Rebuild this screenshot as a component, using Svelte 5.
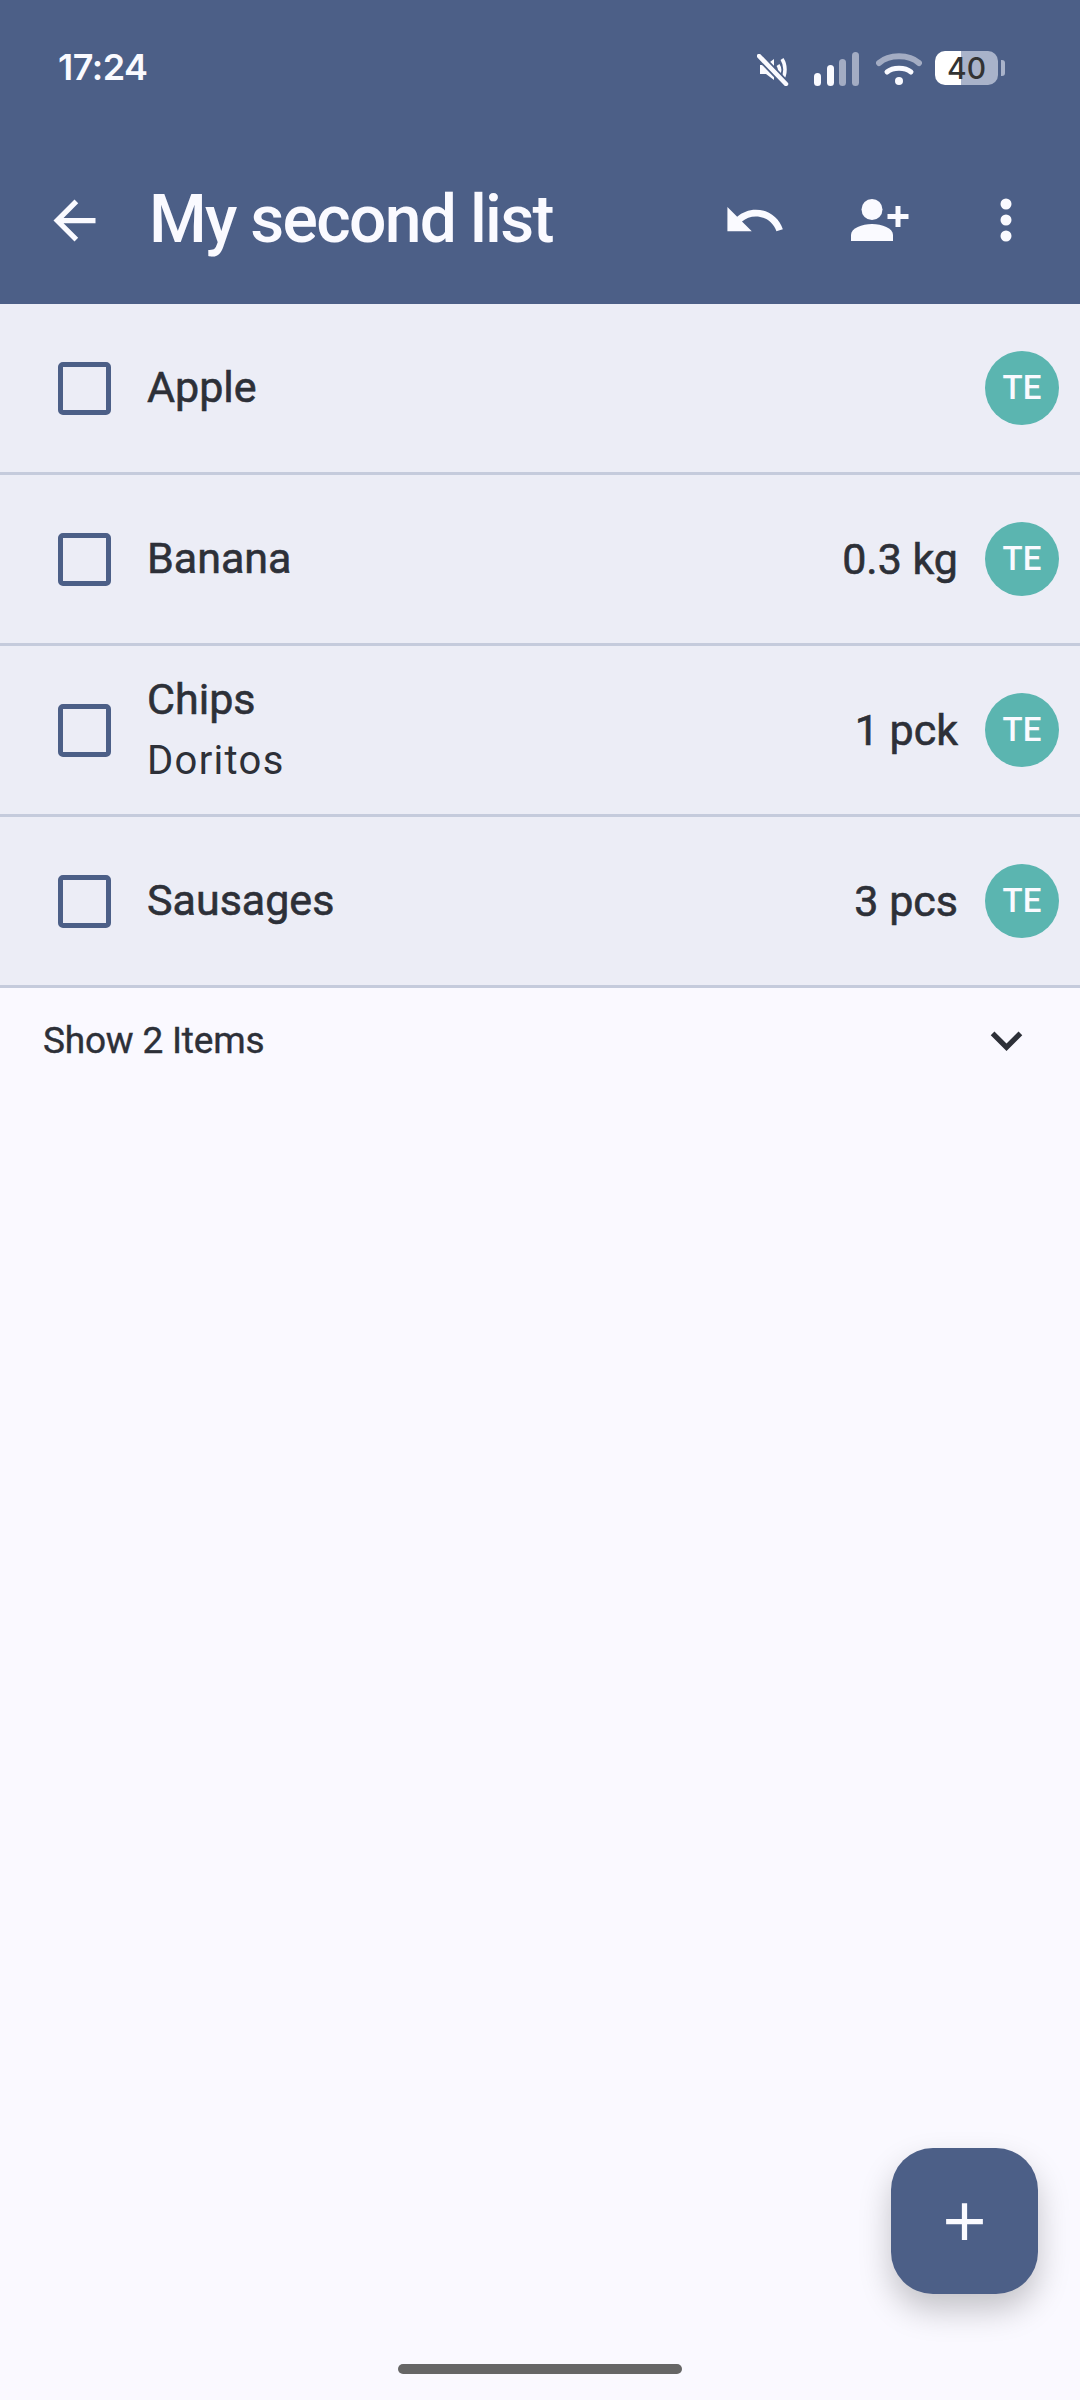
<script>
  const items = [
    { name: 'Apple', note: '', qty: '' },
    { name: 'Banana', note: '', qty: '0.3 kg' },
    { name: 'Chips', note: 'Doritos', qty: '1 pck' },
    { name: 'Sausages', note: '', qty: '3 pcs' }
  ];
</script>

<div class="screen">
  <header class="appbar">
    <div class="status-bar">
      <span class="time">17:24</span>
      <div class="status-icons">
        <svg class="ic-mute" width="32" height="32" viewBox="0 0 32 32">
          <path d="M3 11h6l8-6v21l-8-6H3z" fill="#fafaff" />
          <path d="M21 11c2 3 2 7 0 10M25 5c4 6 4 15 0 21" fill="none" stroke="#fafaff" stroke-width="3.500" />
          <path d="M2 2l27 28" stroke="#4c5f87" stroke-width="8" />
          <path d="M2 2l27 28" stroke="#fafaff" stroke-width="4.500" stroke-linecap="round" />
        </svg>
        <svg class="ic-signal" width="46" height="34" viewBox="0 0 46 34" fill="#fafaff">
          <rect x="0" y="21" width="7" height="13" rx="3.500" />
          <rect x="13" y="13" width="7" height="21" rx="3.500" />
          <rect x="25" y="7" width="7" height="27" rx="3.500" opacity="0.5" />
          <rect x="38" y="0" width="7" height="34" rx="3.500" opacity="0.5" />
        </svg>
        <svg class="ic-wifi" width="46" height="34" viewBox="0 0 46 34" fill="none" stroke="#fafaff">
          <path d="M3 11C13 2 33 2 43 11" stroke-width="6" stroke-linecap="round" opacity="0.5" />
          <path d="M11 20c6-5 18-5 24 0" stroke-width="5" stroke-linecap="round" />
          <circle cx="23" cy="29" r="4" fill="#fafaff" stroke="none" />
        </svg>
        <div class="battery">
          <div class="battery-body">40</div>
          <div class="battery-tip"></div>
        </div>
      </div>
    </div>

    <div class="toolbar">
      <svg class="ic-back" width="63" height="63" viewBox="0 0 24 24" fill="#fafaff">
        <path d="M20 11H7.830l5.590-5.590L12 4l-8 8 8 8 1.410-1.410L7.830 13H20v-2z" />
      </svg>
      <h1 class="title">My second list</h1>
      <svg class="ic-undo" width="65" height="65" viewBox="0 0 24 24" fill="#fafaff">
        <path d="M12.500 8c-2.650 0-5.050.990-6.900 2.600L2 7v9h9l-3.620-3.620c1.390-1.160 3.160-1.880 5.120-1.880 3.540 0 6.550 2.310 7.600 5.500l2.370-.780C21.080 11.030 17.150 8 12.500 8z" />
      </svg>
      <svg class="ic-person" width="60" height="44" viewBox="0 0 60 44" fill="#fafaff">
        <circle cx="22" cy="11.500" r="10.500" />
        <path d="M1 43v-6c0-7 11-11 21-11s21 4 21 11v6z" />
        <path d="M45.500 8h5v8h8v5h-8v8h-5v-8h-8v-5h8z" />
      </svg>
      <svg class="ic-more" width="12" height="44" viewBox="0 0 12 44" fill="#fafaff">
        <circle cx="6" cy="6" r="5.500" />
        <circle cx="6" cy="22" r="5.500" />
        <circle cx="6" cy="38" r="5.500" />
      </svg>
    </div>
  </header>

  <ul class="list">
    {#each items as item}
      <li class="row">
        <span class="checkbox"></span>
        <div class="row-text">
          <span class="name">{item.name}</span>
          {#if item.note}
            <span class="note">{item.note}</span>
          {/if}
        </div>
        {#if item.qty}
          <span class="qty">{item.qty}</span>
        {/if}
        <span class="avatar">TE</span>
      </li>
    {/each}
  </ul>

  <div class="show-row">
    <span class="show-label">Show 2 Items</span>
    <svg class="ic-expand" width="63" height="63" viewBox="0 0 24 24" fill="#2d3038">
      <path d="M16.590 8.590L12 13.170 7.410 8.590 6 10l6 6 6-6z" />
    </svg>
  </div>

  <button class="fab" aria-label="Add item">
    <svg width="63" height="63" viewBox="0 0 24 24" fill="#fafaff">
      <path d="M19 13h-6v6h-2v-6H5v-2h6V5h2v6h6v2z" />
    </svg>
  </button>

  <div class="home-indicator"></div>
</div>

<style>
  :global(body) {
    background: #faf9ff;
  }

  .screen {
    position: relative;
    width: 1080px;
    height: 2400px;
    overflow: hidden;
    background: #faf9ff;
    font-family: Roboto, sans-serif;
    color: #2d3038;
  }

  .appbar {
    background: #4c5f87;
    height: 304px;
    box-sizing: border-box;
  }

  .status-bar {
    height: 136px;
    display: flex;
    align-items: flex-start;
    justify-content: space-between;
    padding: 47px 75px 0 58px;
    box-sizing: border-box;
  }

  .time {
    font-family: Inter, sans-serif;
    font-size: 36px;
    font-weight: 600;
    line-height: 40px;
    letter-spacing: -0.5px;
    color: #fafaff;
  }

  .status-icons {
    display: flex;
    align-items: flex-start;
    margin-top: 4px;
  }

  .ic-mute {
    margin: 3px 25px 0 0;
  }

  .ic-signal {
    margin: 1px 16px 0 0;
  }

  .ic-wifi {
    margin: 1px 13px 0 0;
  }

  .battery {
    display: flex;
    align-items: center;
    gap: 3px;
  }

  .battery-body {
    width: 63px;
    height: 34px;
    border-radius: 10px;
    background: linear-gradient(to right, #fff 41%, #a9b3ca 41%);
    color: #333;
    font-family: Inter, sans-serif;
    font-size: 30px;
    font-weight: 500;
    line-height: 34px;
    text-align: center;
  }

  .battery-tip {
    width: 4px;
    height: 16px;
    border-radius: 0 3px 3px 0;
    background: #a9b3ca;
  }

  .toolbar {
    height: 168px;
    display: flex;
    align-items: center;
    padding-left: 43px;
  }

  .title {
    margin: -2px 0 0 43px;
    font-size: 66px;
    font-weight: 500;
    letter-spacing: -1.700px;
    color: #fafaff;
    white-space: nowrap;
    flex: 1;
  }

  .ic-undo {
    margin-right: 63px;
  }

  .ic-person {
    margin-right: 90px;
  }

  .ic-more {
    margin-right: 68px;
  }

  .list {
    list-style: none;
    margin: 0;
    padding: 0;
  }

  .row {
    height: 171px;
    box-sizing: border-box;
    display: flex;
    align-items: center;
    background: #ecedf6;
    border-bottom: 3px solid #c5cbdc;
    padding: 0 21px 0 58px;
  }

  .checkbox {
    width: 53px;
    height: 53px;
    box-sizing: border-box;
    border: 5px solid #4c5f87;
    border-radius: 5px;
    flex: none;
  }

  .row-text {
    flex: 1;
    display: flex;
    flex-direction: column;
    margin-left: 36px;
  }

  .name {
    font-size: 43px;
    line-height: 58px;
    margin-top: -2px;
    -webkit-text-stroke: 0.6px #2d3038;
  }

  .note {
    margin-top: 6px;
    font-size: 40px;
    line-height: 54px;
    letter-spacing: 1.300px;
  }

  .qty {
    font-size: 43px;
    margin-right: 27px;
    -webkit-text-stroke: 0.6px #2d3038;
  }

  .avatar {
    width: 74px;
    height: 74px;
    border-radius: 50%;
    background: #5bb5b0;
    color: #fafaff;
    font-size: 33px;
    font-weight: 500;
    padding-bottom: 2px;
    box-sizing: border-box;
    display: flex;
    align-items: center;
    justify-content: center;
    flex: none;
  }

  .show-row {
    height: 106px;
    display: flex;
    align-items: center;
    justify-content: space-between;
    padding: 0 42px 0 43px;
  }

  .show-label {
    font-size: 37px;
    letter-spacing: -0.200px;
    margin-top: -2px;
    -webkit-text-stroke: 0.4px #2d3038;
  }

  .ic-expand {
    margin-top: -1px;
  }

  .fab {
    position: absolute;
    left: 891px;
    top: 2148px;
    width: 147px;
    height: 146px;
    padding: 0;
    border: none;
    border-radius: 42px;
    background: #4c5f87;
    box-shadow: 0 16px 32px rgba(0, 0, 0, 0.22);
    display: flex;
    align-items: center;
    justify-content: center;
  }

  .home-indicator {
    position: absolute;
    left: 398px;
    top: 2364px;
    width: 284px;
    height: 10px;
    border-radius: 5px;
    background: #666;
  }
</style>
